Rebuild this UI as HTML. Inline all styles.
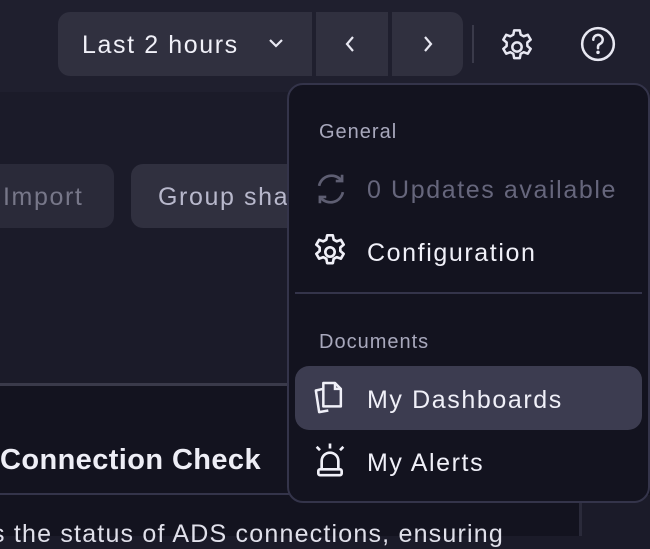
<!DOCTYPE html>
<html><head><style>
*{margin:0;padding:0;box-sizing:border-box}
body{width:650px;height:536px;overflow:hidden;background:#1b1b29;font-family:"Liberation Sans",sans-serif;position:relative;color:#e8e8f2}
.abs{position:absolute}
.hdr{left:0;top:0;width:650px;height:92px;background:#1f1f2e}
.tp{left:58px;top:12px;width:405px;height:64px;background:#30303f;border-radius:12px;overflow:hidden}
.sep{top:0;width:4px;height:64px;background:#1f1f2e}
.t{white-space:nowrap}
.m{letter-spacing:1.6px}
</style></head><body>
<div class="abs hdr"></div>
<div class="abs tp">
  <div class="abs sep" style="left:254px"></div>
  <div class="abs sep" style="left:330px"></div>
  <div class="abs t" style="left:24px;top:19px;font-size:25px;color:#f0f0f8;letter-spacing:1.6px">Last 2 hours</div>
  <svg class="abs" style="left:209px;top:24px" width="18" height="14" viewBox="0 0 18 14"><path d="M3 4l6 6 6-6" fill="none" stroke="#e8e8f2" stroke-width="2.2"/></svg>
  <svg class="abs" style="left:285px;top:22px" width="14" height="20" viewBox="0 0 14 20"><path d="M10 3l-6 7 6 7" fill="none" stroke="#e8e8f2" stroke-width="2.2"/></svg>
  <svg class="abs" style="left:363px;top:22px" width="14" height="20" viewBox="0 0 14 20"><path d="M4 3l6 7-6 7" fill="none" stroke="#e8e8f2" stroke-width="2.2"/></svg>
</div>
<div class="abs" style="left:472px;top:25px;width:2px;height:38px;background:#3a3a4a"></div>
<svg class="abs" style="left:497px;top:27px" width="40" height="40" viewBox="0 0 24 24"><path d="M10.3 2h3.4l.5 2.6 1.8 1 2.5-.9 1.7 2.9-2 1.7v2.1l2 1.7-1.7 2.9-2.5-.9-1.8 1-.5 2.6h-3.4l-.5-2.6-1.8-1-2.5.9-1.7-2.9 2-1.7V9.3l-2-1.7 1.7-2.9 2.5.9 1.8-1z" fill="none" stroke="#e8e8f2" stroke-width="1.5" stroke-linejoin="round"/><circle cx="12" cy="12" r="2.8" fill="none" stroke="#e8e8f2" stroke-width="1.5"/></svg>
<svg class="abs" style="left:579px;top:25px" width="38" height="38" viewBox="0 0 24 24"><circle cx="12" cy="12" r="10" fill="none" stroke="#e8e8f2" stroke-width="1.6"/><path d="M9 9.3a3 3 0 1 1 4.2 2.7c-.8.4-1.2 1-1.2 1.8v.8" fill="none" stroke="#e8e8f2" stroke-width="1.6" stroke-linecap="round"/><circle cx="12" cy="17.3" r="1.1" fill="#e8e8f2"/></svg>

<div class="abs" style="left:-20px;top:164px;width:134px;height:64px;background:#2a2a39;border-radius:12px"></div>
<div class="abs t m" style="left:3px;top:183px;font-size:25px;color:#777789">Import</div>
<div class="abs" style="left:131px;top:164px;width:200px;height:64px;background:#30303f;border-radius:12px"></div>
<div class="abs t m" style="left:158px;top:183px;font-size:25px;color:#b8b8cc">Group share</div>

<div class="abs" style="left:0;top:384px;width:650px;height:152px;background:#13131f"></div>
<div class="abs" style="left:0;top:383px;width:300px;height:3px;background:#3a3a4a"></div>
<div class="abs t" style="left:0;top:444px;font-size:29px;font-weight:bold;color:#eeeef6;letter-spacing:0.4px">Connection Check</div>
<div class="abs" style="left:0;top:493px;width:300px;height:2px;background:#34344a"></div>
<div class="abs" style="left:579px;top:495px;width:3px;height:41px;background:#2a2a3a"></div>
<div class="abs" style="left:582px;top:495px;width:68px;height:41px;background:#1b1b29"></div>
<div class="abs t" style="left:-8px;top:520px;font-size:25px;color:#e0e0ea;letter-spacing:1.2px">s the status of ADS connections, ensuring</div>

<div class="abs" style="left:287px;top:83px;width:363px;height:420px;background:#13131f;border:2px solid #34344a;border-radius:16px"></div>
<div class="abs t" style="left:319px;top:121px;font-size:20px;color:#a8a8bc;letter-spacing:1px">General</div>
<svg class="abs" style="left:311px;top:170px" width="40" height="38" viewBox="0 0 24 24"><path d="M4.5 10a8 8 0 0 1 14-3.5M19.5 14a8 8 0 0 1-14 3.5" fill="none" stroke="#5e5e72" stroke-width="1.7"/><path d="M19 3v4h-4M5 21v-4h4" fill="none" stroke="#5e5e72" stroke-width="1.7"/></svg>
<div class="abs t m" style="left:367px;top:176px;font-size:25px;color:#66667c">0 Updates available</div>
<svg class="abs" style="left:310px;top:232px" width="40" height="40" viewBox="0 0 24 24"><path d="M10.3 2h3.4l.5 2.6 1.8 1 2.5-.9 1.7 2.9-2 1.7v2.1l2 1.7-1.7 2.9-2.5-.9-1.8 1-.5 2.6h-3.4l-.5-2.6-1.8-1-2.5.9-1.7-2.9 2-1.7V9.3l-2-1.7 1.7-2.9 2.5.9 1.8-1z" fill="none" stroke="#f0f0f8" stroke-width="1.6" stroke-linejoin="round"/><circle cx="12" cy="12" r="2.8" fill="none" stroke="#f0f0f8" stroke-width="1.6"/></svg>
<div class="abs t m" style="left:367px;top:239px;font-size:25px;color:#f0f0f8">Configuration</div>
<div class="abs" style="left:295px;top:292px;width:347px;height:2px;background:#34344a"></div>
<div class="abs t" style="left:319px;top:331px;font-size:20px;color:#a8a8bc;letter-spacing:1px">Documents</div>
<div class="abs" style="left:295px;top:366px;width:347px;height:64px;background:#3c3c50;border-radius:14px"></div>
<svg class="abs" style="left:310px;top:378px" width="40" height="40" viewBox="0 0 24 24"><path d="M8 3h7l3.5 3.5V17H8z" fill="none" stroke="#f0f0f8" stroke-width="1.5" stroke-linejoin="round"/><path d="M15 3v3.5h3.5" fill="none" stroke="#f0f0f8" stroke-width="1.5"/><path d="M8 6.5L3.5 7.5 5.5 20.5 11 19.5" fill="none" stroke="#f0f0f8" stroke-width="1.5" stroke-linejoin="round"/></svg>
<div class="abs t m" style="left:367px;top:386px;font-size:25px;color:#f0f0f8">My Dashboards</div>
<svg class="abs" style="left:310px;top:441px" width="40" height="40" viewBox="0 0 24 24"><path d="M7 17v-5a5 5 0 0 1 10 0v5" fill="none" stroke="#f0f0f8" stroke-width="1.6"/><rect x="5" y="17" width="14" height="3.5" rx="1" fill="none" stroke="#f0f0f8" stroke-width="1.6"/><path d="M12 1.5v3M4 3.5l2 2M20 3.5l-2 2" stroke="#f0f0f8" stroke-width="1.6"/></svg>
<div class="abs t m" style="left:367px;top:449px;font-size:25px;color:#f0f0f8">My Alerts</div>
</body></html>
